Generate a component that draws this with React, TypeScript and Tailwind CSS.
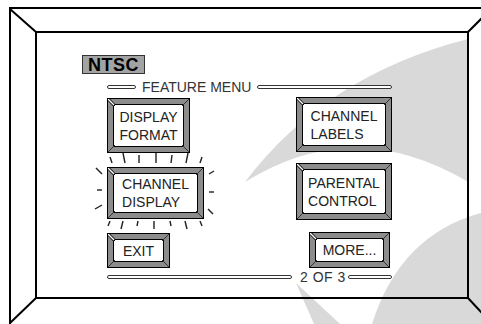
import React from "react";

function Bevel({
  children,
  className = "",
}: {
  children: React.ReactNode;
  className?: string;
}) {
  return (
    <div
      className={`relative border-[1.5px] border-black bg-[#8c8c8c] p-[5px] ${className}`}
    >
      <div className="flex h-full w-full items-center justify-center border-[1.5px] border-black bg-white">
        <div className="text-left text-[14px] leading-[18px] text-[#222]">
          {children}
        </div>
      </div>
      <svg className="absolute left-0 top-0" width="7" height="7">
        <line x1="0" y1="0" x2="7" y2="7" stroke="#000" strokeWidth="3" />
        <line x1="0" y1="0" x2="6" y2="6" stroke="#fff" strokeWidth="1.4" />
      </svg>
      <svg className="absolute right-0 top-0" width="7" height="7">
        <line x1="7" y1="0" x2="0" y2="7" stroke="#333" strokeWidth="1" />
      </svg>
      <svg className="absolute bottom-0 left-0" width="7" height="7">
        <line x1="0" y1="7" x2="7" y2="0" stroke="#333" strokeWidth="1" />
      </svg>
      <svg className="absolute bottom-0 right-0" width="7" height="7">
        <line x1="7" y1="7" x2="0" y2="0" stroke="#333" strokeWidth="1" />
      </svg>
    </div>
  );
}

function DoubleLine({ className = "" }: { className?: string }) {
  return (
    <div
      className={`h-[4px] rounded-[2px] border border-[#333] bg-white ${className}`}
    />
  );
}

const rays: [number, number, number, number][] = [
  [110, 157, 112, 163],
  [123, 153, 125, 163],
  [139, 155, 139, 163],
  [156, 153, 156, 163],
  [172, 155, 171, 163],
  [188, 153, 186, 163],
  [202, 157, 200, 163],
  [96, 168, 102, 174],
  [97, 190, 102, 190],
  [95, 209, 102, 205],
  [209, 174, 214, 171],
  [209, 192, 214, 192],
  [208, 209, 213, 214],
  [110, 221, 108, 226],
  [123, 221, 121, 229],
  [138, 221, 137, 226],
  [154, 221, 154, 229],
  [170, 221, 171, 226],
  [185, 221, 187, 229],
  [200, 221, 202, 226],
];

export default function App() {
  return (
    <div className="relative h-[324px] w-[481px] overflow-hidden bg-white font-['Liberation_Sans',Arial,sans-serif]">
      <svg
        className="absolute inset-0"
        width="481"
        height="324"
        viewBox="0 0 481 324"
      >
        <defs>
          <clipPath id="screen">
            <rect x="36" y="32" width="432" height="266" />
          </clipPath>
        </defs>
        <g clipPath="url(#screen)" fill="#d9d9d9">
          <path d="M245,182 Q330,70 481,36 L481,190 Q360,110 245,182 Z" />
        </g>
        <g fill="#d9d9d9">
          <path d="M481,213 Q400,235 372,324 L481,324 Z" />
          <path d="M296,283 L340,324 L314,324 Z" />
        </g>
        <g stroke="#000" strokeWidth="2" fill="none">
          <line x1="9" y1="8" x2="481" y2="8" />
          <line x1="10" y1="8" x2="10" y2="324" />
          <rect x="36" y="32" width="432" height="266" />
          <line x1="10" y1="9" x2="36" y2="32" />
          <line x1="468" y1="32" x2="482" y2="18" />
          <line x1="10" y1="323" x2="36" y2="298" />
          <line x1="468" y1="298" x2="482" y2="313" />
        </g>
      </svg>

      <div className="relative pl-[82px] pt-[55px]">
        <div className="flex h-[19px] w-[63px] items-center justify-center border border-[#333] bg-[#a3a3a3] text-[18px] font-bold leading-none tracking-[0.5px] text-black">
          NTSC
        </div>

        <div className="ml-[25px] mt-[6px] flex h-[14px] w-[285px] items-center">
          <DoubleLine className="w-[29px]" />
          <span className="mx-[6px] text-[14px] leading-none text-[#333]">
            FEATURE MENU
          </span>
          <DoubleLine className="flex-1" />
        </div>

        <div className="ml-[25px] mt-[3px] flex w-[285px] justify-between">
          <div className="flex flex-col items-start">
            <Bevel className="mt-[1px] h-[55px] w-[83px]">
              DISPLAY
              <br />
              FORMAT
            </Bevel>
            <div className="relative mt-[14px]">
              <svg
                className="absolute left-[-15px] top-[-16px]"
                width="127"
                height="84"
                viewBox="92 151 127 84"
              >
                {rays.map(([x1, y1, x2, y2], i) => (
                  <line
                    key={i}
                    x1={x1}
                    y1={y1}
                    x2={x2}
                    y2={y2}
                    stroke="#222"
                    strokeWidth="1.4"
                  />
                ))}
              </svg>
              <Bevel className="h-[52px] w-[97px]">
                CHANNEL
                <br />
                DISPLAY
              </Bevel>
            </div>
            <Bevel className="mt-[14px] h-[35px] w-[63px]">EXIT</Bevel>
          </div>

          <div className="flex flex-col items-end">
            <Bevel className="h-[55px] w-[96px]">
              CHANNEL
              <br />
              LABELS
            </Bevel>
            <Bevel className="mt-[11px] h-[57px] w-[96px]">
              PARENTAL
              <br />
              CONTROL
            </Bevel>
            <Bevel className="mr-[2px] mt-[12px] h-[36px] w-[81px]">
              MORE...
            </Bevel>
          </div>
        </div>

        <div className="ml-[25px] mt-[2px] flex h-[14px] w-[285px] items-center">
          <DoubleLine className="w-[185px]" />
          <span className="ml-[8px] mr-[2px] text-[14px] leading-none tracking-[0.5px] text-[#333]">
            2 OF 3
          </span>
          <DoubleLine className="flex-1" />
        </div>
      </div>
    </div>
  );
}
